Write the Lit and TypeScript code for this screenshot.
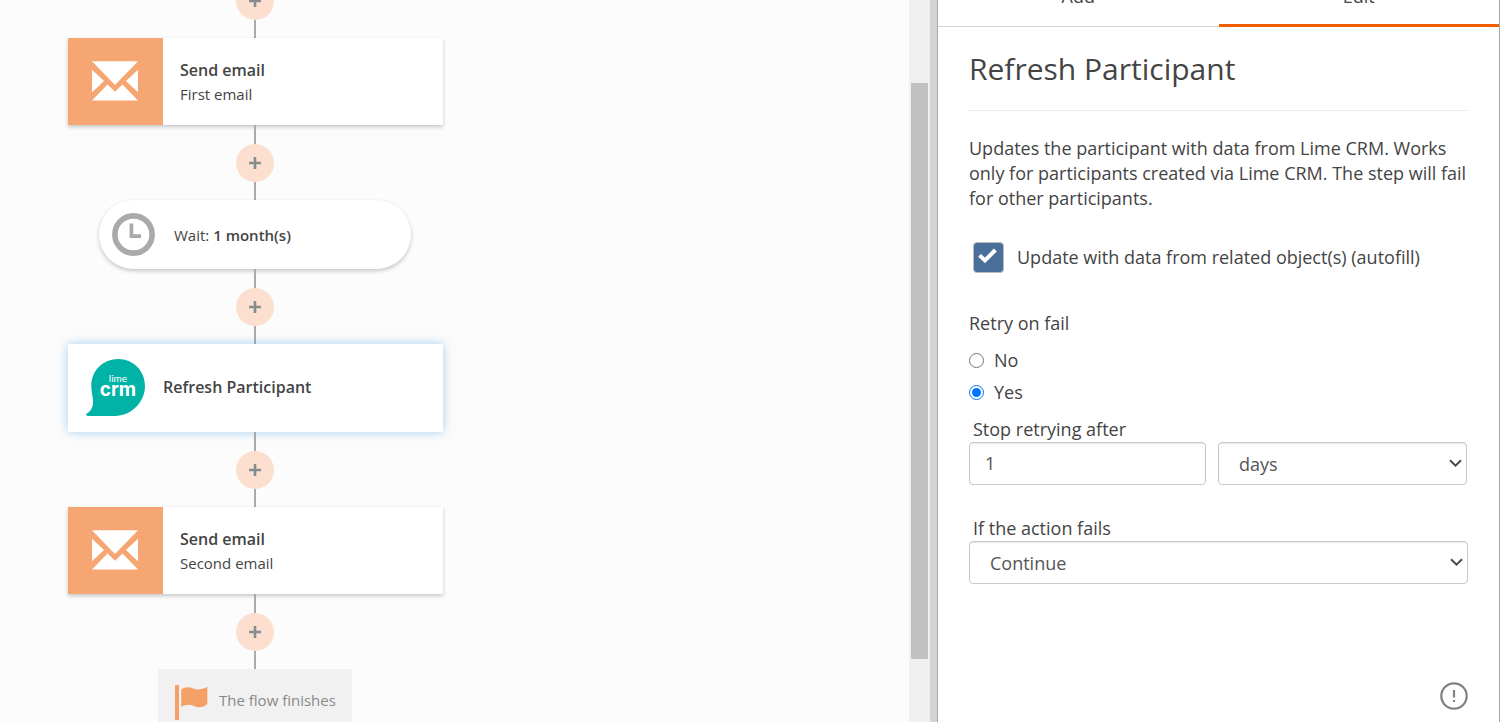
import { LitElement, html, svg, css, nothing } from "lit";
import { customElement, property, state } from "lit/decorators.js";

const base = css`
  *,
  *::before,
  *::after {
    box-sizing: border-box;
  }
  svg {
    display: block;
  }
`;

const mailIcon = html`<svg width="47" height="41" viewBox="0 0 47 41" fill="#fff" aria-hidden="true">
  <path d="M0 .3H46L23 24Z" />
  <path d="M0 8.8L12 20L0 31.3Z" />
  <path d="M46 8.8L34 20L46 31.3Z" />
  <path d="M0 39.6L15.5 23.6L23 30.8L30.5 23.6L46 39.6Z" />
</svg>`;

const clockIcon = html`<svg width="43" height="44" viewBox="0 0 43 44" aria-hidden="true">
  <circle cx="21.5" cy="21.5" r="18.6" fill="none" stroke="#aaa" stroke-width="5.6" />
  <path d="M17.6 10.5H21.3V21.3H29V25.1H17.6Z" fill="#aaa" />
</svg>`;

const limeLogo = html`<svg width="59" height="58" viewBox="0 0 59 58" aria-hidden="true">
  <path
    fill="#00b3a6"
    d="M5.3 27C5.3 11.5 17 0 32.3 0C47 0 59 11.6 59 27C59 42.5 46 57 28.5 57L2.5 57C-.2 57 -.6 55.6 1 54.6C5.2 51.4 7.6 47.6 7 41C6.5 36 5.3 32 5.3 27Z"
  />
  <text x="32" y="23" text-anchor="middle" font-family="Lato, sans-serif" font-size="10" fill="#fff">lime</text>
  <text x="32" y="37" text-anchor="middle" font-family="Inter, sans-serif" font-weight="700" font-size="19" fill="#fff">crm</text>
</svg>`;

const flagIcon = html`<svg width="33" height="35" viewBox="0 0 33 35" fill="#f5a067" aria-hidden="true">
  <rect x="0" y="0" width="4" height="35" />
  <path d="M6.3 4.5C10 1.8 14 1.6 18 3.4C22 5.2 27 5 32.3 1.8V19C28 22.6 23.6 23 19 21C14.6 19 10.6 19.2 6.3 22Z" />
</svg>`;

const chevron = svg`<path d="M1 1.2L6.5 6.7L12 1.2" fill="none" stroke="#4a4a4a" stroke-width="2" />`;

@customElement("flow-step")
class FlowStep extends LitElement {
  @property() kind = "email";
  @property() heading = "";
  @property() detail = "";
  @property({ type: Boolean, reflect: true }) selected = false;

  static styles = [
    base,
    css`
      :host {
        display: block;
        color: #444;
      }
      .card {
        display: flex;
        align-items: stretch;
        width: 375px;
        height: 87px;
        background: #fff;
        box-shadow: 0 2px 4px rgba(0, 0, 0, 0.22);
      }
      .card.selected {
        height: 88px;
        box-shadow: 0 0 10px rgba(80, 165, 230, 0.5);
      }
      .tile {
        display: grid;
        place-items: center;
        width: 95px;
        background: #f5a673;
      }
      .tile.plain {
        background: none;
      }
      .text {
        display: flex;
        flex-direction: column;
        justify-content: center;
        padding: 1px 0 0 17px;
      }
      .plain + .text {
        padding: 0 0 2px;
      }
      .heading {
        font-size: 16px;
        line-height: 24px;
        font-weight: 600;
      }
      .detail {
        font-size: 15px;
        line-height: 24px;
      }
      .pill {
        display: flex;
        align-items: center;
        gap: 19px;
        width: 312px;
        height: 69px;
        padding: 0 13px;
        border-radius: 35px;
        background: #fff;
        box-shadow: 0 2px 4px rgba(0, 0, 0, 0.22);
        font-size: 15px;
      }
      .pill b {
        font-weight: 600;
      }
      .end {
        display: flex;
        gap: 11px;
        width: 194px;
        height: 69px;
        padding: 16px 0 16px 17px;
        background: #f1f1f1;
        color: #8a8a8a;
        font-size: 15px;
        line-height: 31px;
        white-space: nowrap;
      }
    `,
  ];

  render() {
    if (this.kind === "wait") {
      return html`<div class="pill">${clockIcon}<span>${this.heading} <b>${this.detail}</b></span></div>`;
    }
    if (this.kind === "end") {
      return html`<div class="end">${flagIcon}<span>${this.heading}</span></div>`;
    }
    const crm = this.kind === "crm";
    return html`<div class="card ${this.selected ? "selected" : ""}">
      <div class="tile ${crm ? "plain" : ""}">${crm ? limeLogo : mailIcon}</div>
      <div class="text">
        <span class="heading">${this.heading}</span>
        ${this.detail ? html`<span class="detail">${this.detail}</span>` : nothing}
      </div>
    </div>`;
  }
}

@customElement("flow-connector")
class FlowConnector extends LitElement {
  static styles = [
    base,
    css`
      :host {
        display: flex;
        justify-content: center;
        align-items: center;
        height: 75px;
        background: linear-gradient(#aaa, #aaa) center / 2px 100% no-repeat;
      }
      .add {
        display: grid;
        place-items: center;
        width: 38px;
        height: 38px;
        padding: 0;
        border: 0;
        border-radius: 50%;
        background: #fcdfcf;
        cursor: pointer;
      }
    `,
  ];

  render() {
    return html`<button class="add" type="button" aria-label="Add step">
      <svg width="12" height="12" viewBox="0 0 12 12" fill="none" stroke="#868c90" stroke-width="2.6" aria-hidden="true">
        <path d="M6 0V12M0 6H12" />
      </svg>
    </button>`;
  }
}

@customElement("edit-panel")
class EditPanel extends LitElement {
  @state() private tab = "Edit";

  static styles = [
    base,
    css`
      :host {
        display: flex;
        flex-direction: column;
        height: 100%;
        overflow: hidden;
        color: #444;
        font-size: 18px;
        line-height: 25px;
      }
      .tabs {
        display: grid;
        grid-template-columns: 1fr 1fr;
        flex: none;
        margin-top: -40px;
      }
      .tab {
        height: 67px;
        padding: 6px 0 0;
        border: 0;
        border-bottom: 1px solid #d4d4d4;
        background: none;
        color: inherit;
        font: inherit;
        cursor: pointer;
      }
      .tab.active {
        padding-top: 8px;
        border-bottom: 3px solid #f06000;
      }
      .body {
        display: flex;
        flex-direction: column;
        flex: 1;
        padding: 22px 31px 12px;
      }
      h1 {
        margin: 0;
        padding-bottom: 21px;
        border-bottom: 1px solid #ebebeb;
        font-size: 30px;
        line-height: 40px;
        font-weight: 400;
      }
      p {
        margin: 25px 0 0;
      }
      .check {
        display: flex;
        align-items: center;
        gap: 13px;
        margin: 31px 0 0 4px;
      }
      .box {
        display: grid;
        flex: none;
        width: 31px;
        height: 31px;
      }
      .box > * {
        grid-area: 1 / 1;
      }
      .box input {
        appearance: none;
        width: 31px;
        height: 31px;
        margin: 0;
        border: 1px solid #bbb;
        border-radius: 4px;
        background: #fff;
      }
      .box input:checked {
        background: #4a6f9a;
      }
      .box svg {
        place-self: center;
        pointer-events: none;
        margin: 0 2px 4px 0;
      }
      fieldset {
        display: flex;
        flex-direction: column;
        gap: 7px;
        margin: 38px 0 0;
        padding: 0;
        border: 0;
      }
      legend {
        padding: 0;
        margin-bottom: 12px;
      }
      .radio {
        display: flex;
        align-items: center;
        gap: 10px;
      }
      .radio input {
        width: 15px;
        height: 15px;
        margin: 0;
      }
      .field-label {
        padding-left: 4px;
      }
      .stop {
        margin-top: 12px;
      }
      .fails {
        margin-top: 31px;
      }
      .pair {
        display: grid;
        grid-template-columns: 237fr 249fr;
        gap: 12px;
        padding-right: 1px;
      }
      .control {
        width: 100%;
        height: 43px;
        margin: 0;
        border: 1px solid #c8c8c8;
        border-radius: 4px;
        background: #fff;
        box-shadow: inset 0 1px 1px rgba(0, 0, 0, 0.08);
        color: #555;
        font: inherit;
        padding: 0 15px 2px;
      }
      .select {
        display: grid;
      }
      .select > * {
        grid-area: 1 / 1;
      }
      .select select {
        appearance: none;
        padding: 2px 20px 0;
      }
      .select svg {
        place-self: center end;
        margin-right: 5px;
        pointer-events: none;
      }
      .info {
        align-self: flex-end;
        margin-top: auto;
        padding: 0;
        border: 0;
        background: none;
        cursor: pointer;
      }
    `,
  ];

  private select(id: string, label: string, options: string[]) {
    return html`<div class="select">
      <select class="control" id=${id} aria-label=${label}>
        ${options.map((o) => html`<option>${o}</option>`)}
      </select>
      <svg width="13" height="9" viewBox="0 0 13 9" aria-hidden="true">${chevron}</svg>
    </div>`;
  }

  render() {
    return html`
      <div class="tabs" role="tablist">
        ${["Add", "Edit"].map(
          (t) => html`<button
            type="button"
            role="tab"
            class="tab ${this.tab === t ? "active" : ""}"
            aria-selected=${this.tab === t}
            @click=${() => (this.tab = t)}
          >
            ${t}
          </button>`,
        )}
      </div>
      <div class="body">
        <h1>Refresh Participant</h1>
        <p>
          Updates the participant with data from Lime CRM. Works only for participants created via Lime CRM. The step
          will fail for other participants.
        </p>
        <label class="check" for="autofill">
          <span class="box">
            <input id="autofill" type="checkbox" checked />
            <svg width="19" height="15" viewBox="0 0 19 15" aria-hidden="true">
              <path d="M1.6 7.4L7 12.4L17.4 2" fill="none" stroke="#fff" stroke-width="4" />
            </svg>
          </span>
          <span>Update with data from related object(s) (autofill)</span>
        </label>
        <fieldset>
          <legend>Retry on fail</legend>
          <label class="radio"><input type="radio" name="retry" value="no" />No</label>
          <label class="radio"><input type="radio" name="retry" value="yes" checked />Yes</label>
        </fieldset>
        <label class="field-label stop" for="amount">Stop retrying after</label>
        <div class="pair">
          <input class="control" id="amount" type="text" value="1" />
          ${this.select("unit", "Unit", ["days", "hours"])}
        </div>
        <label class="field-label fails" for="fallback">If the action fails</label>
        ${this.select("fallback", "If the action fails", ["Continue", "Stop"])}
        <button class="info" type="button" aria-label="Information">
          <svg width="28" height="28" viewBox="0 0 28 28" fill="none" stroke="#808080" aria-hidden="true">
            <circle cx="14" cy="14" r="12.7" stroke-width="2.2" />
            <path d="M14 8V15.6M14 18V20" stroke-width="2.2" />
          </svg>
        </button>
      </div>
    `;
  }
}

@customElement("app-root")
class AppRoot extends LitElement {
  static styles = [
    base,
    css`
      :host {
        display: flex;
        height: 100vh;
        overflow: hidden;
        background: #fff;
        font-family: "Open Sans", "Noto Sans", sans-serif;
      }
      .canvas {
        flex: 1;
        min-width: 0;
        overflow: hidden;
        background: #fcfcfc;
      }
      .flow {
        display: flex;
        flex-direction: column;
        align-items: center;
        width: 374px;
        margin: -37px 0 0 68px;
      }
      .flow flow-connector {
        width: 100%;
      }
      .flow .wide {
        align-self: flex-start;
      }
      .scrollbar {
        flex: none;
        width: 21px;
        padding: 83px 2px 63px;
        background: #f0f0f0;
      }
      .thumb {
        height: 100%;
        background: #c1c1c1;
      }
      .divider {
        flex: none;
        width: 8px;
        border-right: 1px solid #a8a8a8;
        background: #d4d4d4;
      }
      .panel {
        flex: none;
        width: 562px;
        margin-right: 1px;
        border-right: 1px solid #a8a8a8;
      }
    `,
  ];

  render() {
    return html`
      <main class="canvas">
        <div class="flow">
          <flow-connector></flow-connector>
          <flow-step class="wide" kind="email" heading="Send email" detail="First email"></flow-step>
          <flow-connector></flow-connector>
          <flow-step kind="wait" heading="Wait:" detail="1 month(s)"></flow-step>
          <flow-connector></flow-connector>
          <flow-step class="wide" kind="crm" heading="Refresh Participant" selected></flow-step>
          <flow-connector></flow-connector>
          <flow-step class="wide" kind="email" heading="Send email" detail="Second email"></flow-step>
          <flow-connector></flow-connector>
          <flow-step kind="end" heading="The flow finishes"></flow-step>
        </div>
      </main>
      <div class="scrollbar"><div class="thumb"></div></div>
      <div class="divider"></div>
      <aside class="panel"><edit-panel></edit-panel></aside>
    `;
  }
}
